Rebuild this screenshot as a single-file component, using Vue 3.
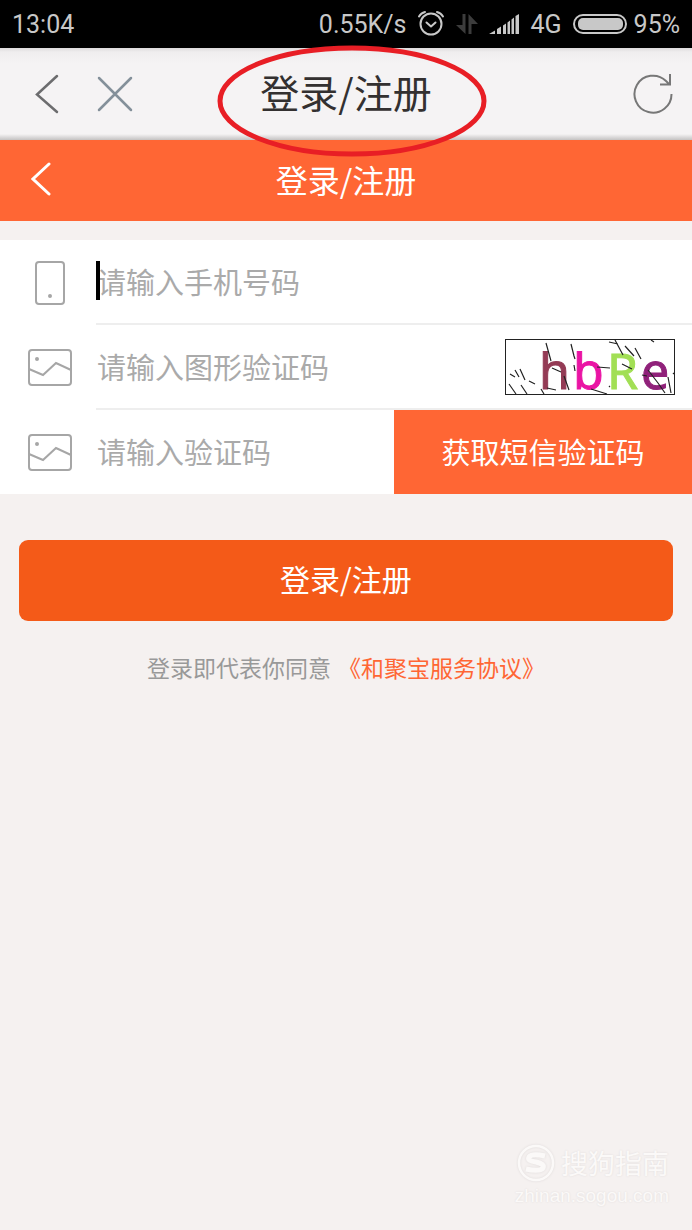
<script setup>
import { ref } from 'vue'

const phone = ref('')
const captcha = ref('')
const smsCode = ref('')
</script>

<template>
  <div class="screen">
    <div class="status">
      <span>13:04</span>
      <div class="status-right">
        <span>0.55K/s</span>
        <svg class="alarm" width="28" height="26" viewBox="0 0 28 26" fill="none" stroke="#c8c8c8" stroke-width="2" stroke-linecap="round" stroke-linejoin="round">
          <circle cx="14" cy="14" r="10.5" />
          <path d="M2 6.500Q4 3 8 2M26 6.500Q24 3 20 2M9.500 12.500L14 16.500L18.500 12.500" />
        </svg>
        <svg width="22" height="20" viewBox="0 0 22 20" fill="#3c3c3c">
          <path d="M6.500 0H9.500V20L0 11H6.500ZM12.500 20H15.500V10H22L12.500 0Z" />
        </svg>
        <svg width="30" height="20" viewBox="0 0 30 20" fill="#c8c8c8">
          <path d="M0 20L6 16.500V20ZM8 15L12 12.500V20H8ZM14 11.500L17 9.500V20H14ZM18.500 8.500L21 6.500V20H18.500ZM22.500 5.500L25 3.500V20H22.500ZM26.500 2L30 0V20H26.500Z" />
        </svg>
        <span>4G</span>
        <svg class="battery" width="54" height="20" viewBox="0 0 54 20">
          <rect x="1" y="1" width="52" height="18" rx="9" fill="none" stroke="#c8c8c8" stroke-width="2" />
          <rect x="5" y="4" width="45" height="12" rx="5" fill="#c8c8c8" />
        </svg>
        <span>95%</span>
      </div>
    </div>

    <header class="browser-bar">
      <div class="nav-left">
        <button class="icon-btn" aria-label="后退">
          <svg width="24" height="40" viewBox="0 0 24 40" fill="none" stroke="#6c6c6e" stroke-width="2.500" stroke-linecap="round">
            <path d="M22 2L2 20.500L22 38" />
          </svg>
        </button>
        <button class="icon-btn" aria-label="关闭">
          <svg width="36" height="36" viewBox="0 0 36 36" fill="none" stroke="#84909a" stroke-width="2.500" stroke-linecap="round">
            <path d="M2 2L34 34M34 2L2 34" />
          </svg>
        </button>
      </div>
      <h1>登录/注册</h1>
      <button class="icon-btn refresh" aria-label="刷新">
        <svg width="40" height="40" viewBox="0 0 40 40" fill="none" stroke="#777" stroke-width="2">
          <path d="M38.500 20A18.500 18.500 0 1 1 33 7L36 10M27 10.500H37V0" />
        </svg>
      </button>
      <svg class="mark" width="270" height="112" viewBox="0 0 270 112" fill="none" stroke="#e81e25" stroke-width="5">
        <ellipse cx="135" cy="56" rx="132" ry="53" />
      </svg>
    </header>

    <div class="page-bar">
      <button class="icon-btn page-back" aria-label="返回">
        <svg width="20" height="34" viewBox="0 0 20 34" fill="none" stroke="#fff" stroke-width="3" stroke-linecap="round">
          <path d="M18 2L2 17L18 32" />
        </svg>
      </button>
      <h2>登录/注册</h2>
    </div>

    <form @submit.prevent>
      <div class="fields">
        <div class="row">
          <label class="row-icon" for="phone" aria-label="手机号码">
            <svg width="30" height="44" viewBox="0 0 30 44" fill="none" stroke="#a6a6a6" stroke-width="2">
              <rect x="1" y="1" width="28" height="42" rx="3" />
              <circle cx="15" cy="35" r="1" />
            </svg>
          </label>
          <div class="row-body focused">
            <input id="phone" v-model="phone" type="tel" placeholder="请输入手机号码" />
          </div>
        </div>
        <div class="row">
          <label class="row-icon" for="captcha" aria-label="图形验证码">
            <svg width="44" height="37" viewBox="0 0 44 37" fill="none" stroke="#a6a6a6" stroke-width="2">
              <rect x="1" y="1" width="42" height="35" rx="3" />
              <path d="M1 20L15 26L28 14L43 21" />
              <circle cx="9" cy="10" r="1" />
            </svg>
          </label>
          <div class="row-body">
            <input id="captcha" v-model="captcha" type="text" placeholder="请输入图形验证码" />
            <button type="button" class="captcha" aria-label="刷新图形验证码">
              <svg width="170" height="56" viewBox="0 0 170 56">
                <rect x="0.500" y="0.500" width="169" height="55" fill="#fff" stroke="#222" />
                <g class="code">
                  <text x="34" y="50" fill="#943b55" stroke="#943b55">h</text>
                  <text x="68" y="50" fill="#ea14a4" stroke="#ea14a4">b</text>
                  <text x="102" y="50" fill="#a2df55" stroke="#a2df55">R</text>
                  <text x="136" y="50" fill="#90217a" stroke="#90217a">e</text>
                </g>
                <g stroke="#222" stroke-width="1.200" fill="none">
                  <path d="M5 35L10 38M10 31L14 38M15 30L20 41M4 45L11 55M16 46L22 55M24 42L30 45M36 50L39 55M41 4L46 22M47 29L56 33M42 49L51 51M59 37L64 51M66 5L69 17L70 20M69 26L70 32M92 28L105 29M86 50L102 55M104 3L113 5M110 1L118 16M120 7L129 17M130 9L136 20M117 25L127 30M146 1L149 3M137 36L142 37M143 31L153 44L160 54M163 38L166 54M104 47L105 48M168 34L169 35" />
                </g>
              </svg>
            </button>
          </div>
        </div>
        <div class="row">
          <label class="row-icon" for="sms" aria-label="验证码">
            <svg width="44" height="37" viewBox="0 0 44 37" fill="none" stroke="#a6a6a6" stroke-width="2">
              <rect x="1" y="1" width="42" height="35" rx="3" />
              <path d="M1 20L15 26L28 14L43 21" />
              <circle cx="9" cy="10" r="1" />
            </svg>
          </label>
          <div class="row-body">
            <input id="sms" v-model="smsCode" type="text" placeholder="请输入验证码" />
            <button type="button" class="send">获取短信验证码</button>
          </div>
        </div>
      </div>

      <button type="submit" class="submit">登录/注册</button>
    </form>

    <p class="terms"><span>登录即代表你同意</span><a href="#">《和聚宝服务协议》</a></p>

    <footer class="watermark">
      <div class="brand">
        <svg width="38" height="38" viewBox="0 0 38 38" fill="none" stroke="#fbf9f8">
          <circle cx="19" cy="19" r="17" stroke-width="2.500" />
          <path d="M28 12Q15 9 12 13Q10 17 19 18Q28 20 26 24Q23 28 9 25" stroke-width="5" />
        </svg>
        <span>搜狗指南</span>
      </div>
      <div class="site">zhinan.sogou.com</div>
    </footer>
  </div>
</template>

<style>
body {
  background: #f5f1f0;
}
</style>

<style scoped>
.screen {
  display: flex;
  flex-direction: column;
  min-height: 100vh;
  background: #f5f1f0;
  font-family: "Noto Sans CJK SC", sans-serif;
}

button {
  padding: 0;
  border: 0;
  background: none;
  font: inherit;
  cursor: pointer;
}

svg {
  display: block;
}

h1,
h2,
p {
  margin: 0;
  font-weight: 400;
}

.status {
  display: flex;
  justify-content: space-between;
  align-items: center;
  height: 48px;
  padding: 0 12px;
  background: #000;
  color: #c8c8c8;
  font: 25px/48px Roboto, sans-serif;
}

.status span {
  padding-top: 2px;
}

.status-right {
  display: flex;
  align-items: center;
  gap: 11px;
}

.alarm {
  margin-bottom: 2px;
}

.battery {
  margin-right: -4px;
}

.browser-bar {
  position: relative;
  display: grid;
  grid-template-columns: 1fr auto 1fr;
  align-items: center;
  height: 92px;
  padding: 0 19px;
  box-sizing: border-box;
  background: linear-gradient(#dddbdc, #efedee 4px, #f5f3f4 16px, #f5f3f4 86px, #c4c2c2 92px);
}

.nav-left {
  display: flex;
  align-items: center;
  gap: 38px;
  padding-left: 16px;
}

h1 {
  padding-bottom: 6px;
  color: #333030;
  font-size: 39px;
  line-height: 86px;
}

.refresh {
  justify-self: end;
}

.mark {
  position: absolute;
  left: 50%;
  top: -3px;
  margin-left: -129px;
  pointer-events: none;
  z-index: 1;
}

.page-bar {
  display: grid;
  grid-template-columns: 1fr auto 1fr;
  align-items: center;
  height: 81px;
  padding: 0 31px 4px;
  box-sizing: border-box;
  background: #ff6634;
}

.page-back {
  justify-self: start;
}

h2 {
  color: #fff;
  font-size: 32px;
  line-height: 76px;
}

.fields {
  margin-top: 19px;
  background: #fff;
}

.row {
  display: flex;
  height: 85px;
}

.row:last-child {
  height: 84px;
}

.row-icon {
  display: flex;
  align-items: center;
  justify-content: center;
  flex: 0 0 96px;
}

.row-icon svg {
  margin-left: 4px;
}

.row-body {
  position: relative;
  display: flex;
  align-items: center;
  flex: 1;
  min-width: 0;
  box-sizing: border-box;
  border-bottom: 2px solid #eee;
}

.row:last-child .row-body {
  border-bottom: 0;
}

.focused::before {
  content: "";
  position: absolute;
  left: 0;
  top: 21px;
  width: 4px;
  height: 39px;
  background: #000;
}

input {
  flex: 1;
  min-width: 0;
  height: 60px;
  padding: 0 0 2px 1px;
  border: 0;
  outline: 0;
  background: transparent;
  color: #333;
  font: inherit;
  font-size: 29px;
}

input::placeholder {
  color: #aaa;
  opacity: 1;
}

.captcha {
  margin-right: 17px;
}

.captcha svg {
  overflow: visible;
}

.code {
  font-family: "Noto Sans", sans-serif;
  font-size: 50px;
  stroke-width: 1;
}

.send {
  flex: 0 0 50%;
  align-self: stretch;
  padding-bottom: 2px;
  background: #ff6634;
  color: #fff;
  font-size: 29px;
}

.submit {
  display: block;
  width: calc(100% - 38px);
  height: 81px;
  margin: 46px auto 0;
  padding-bottom: 6px;
  border-radius: 9px;
  background: #f45a18;
  color: #fff;
  font-size: 30px;
}

.terms {
  display: flex;
  justify-content: center;
  gap: 7px;
  margin-top: 29px;
  color: #999;
  font-size: 23px;
  line-height: 34px;
}

.terms a {
  color: #ff6634;
  text-decoration: none;
}

.watermark {
  align-self: flex-end;
  margin-top: auto;
  padding: 0 23px 20px 0;
  color: #fbf9f8;
  text-shadow: 0 0 2px #dedad9;
}

.brand {
  display: flex;
  align-items: center;
  justify-content: flex-end;
  gap: 6px;
  font-size: 27px;
  line-height: 38px;
}

.brand svg {
  filter: drop-shadow(0 0 1px #dedad9);
}

.site {
  font: 19px/28px "Liberation Sans", sans-serif;
}
</style>
